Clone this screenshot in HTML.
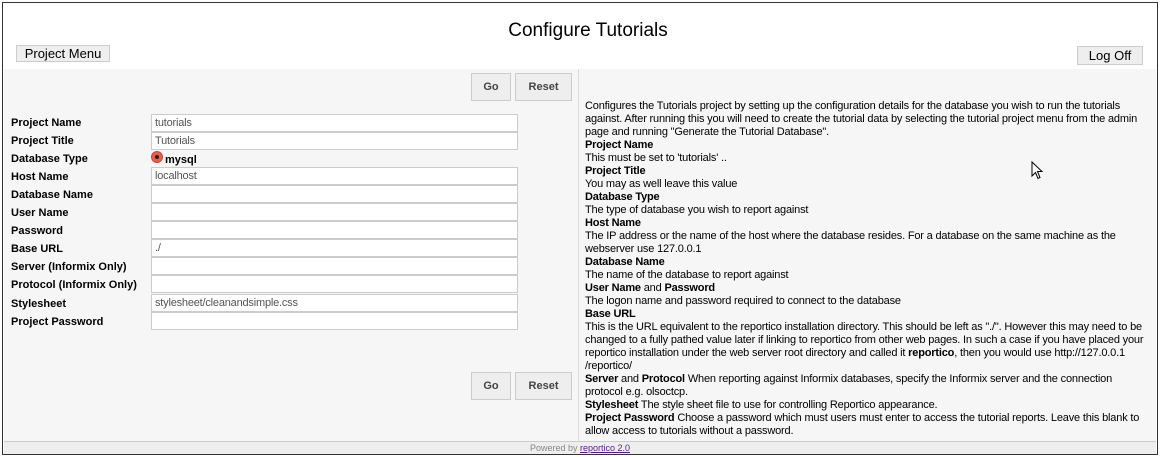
<!DOCTYPE html>
<html><head><meta charset="utf-8"><style>
*{margin:0;padding:0;box-sizing:border-box}
body{width:1160px;height:457px;background:#fff;font-family:"Liberation Sans",Arial,sans-serif;position:relative;overflow:hidden}
.outer{position:absolute;left:2px;top:2px;width:1156px;height:453px;border:1px solid #333;}
.abs{position:absolute}
h1{position:absolute;left:0;width:1176px;top:20px;text-align:center;font-weight:normal;font-size:19px;color:#000}
.btn{position:absolute;background:#eee;border:1px solid #ccc;font-size:13px;text-align:center;color:#000}
.panel{position:absolute;left:4px;top:69px;width:1152px;height:373px;background:#f6f6f6}
.div{position:absolute;left:578px;top:69px;width:1px;height:373px;background:#ddd}
.gb{position:absolute;background:#eee;border:1px solid #ccc;font-size:11px;font-weight:bold;color:#444;text-align:center;line-height:26px;height:28px}
.lbl{position:absolute;left:11px;font-size:11px;font-weight:bold;color:#000}
.inp{position:absolute;left:151px;width:367px;height:18px;background:#fff;border:1px solid #ccc;font-size:11px;color:#555;padding-left:3px;line-height:16px;letter-spacing:-0.2px}
.txt{position:absolute;left:585px;top:100px;font-size:11px;line-height:13px;color:#000;white-space:nowrap;letter-spacing:-0.18px}
.foot{position:absolute;left:4px;top:441px;width:1152px;height:13px;background:#eee;border-top:1px solid #ccc;font-size:9px;color:#888;text-align:center;line-height:12px}
.foot a{color:#551a8b;text-decoration:underline}
</style></head><body>
<div class="outer"></div>
<h1>Configure Tutorials</h1>
<div class="btn" style="left:16px;top:45px;width:94px;height:17px;line-height:15px">Project Menu</div>
<div class="btn" style="left:1077px;top:46px;width:66px;height:19px;line-height:17px">Log Off</div>
<div class="panel"></div>
<div class="div"></div>
<div class="gb" style="left:471px;top:73px;width:40px">Go</div>
<div class="gb" style="left:515px;top:73px;width:57px">Reset</div>
<div class="gb" style="left:471px;top:372px;width:40px">Go</div>
<div class="gb" style="left:515px;top:372px;width:57px">Reset</div>

<div class="lbl" style="top:117px">Project Name</div>
<div class="lbl" style="top:135px">Project Title</div>
<div class="lbl" style="top:153px">Database Type</div>
<div class="lbl" style="top:171px">Host Name</div>
<div class="lbl" style="top:189px">Database Name</div>
<div class="lbl" style="top:207px">User Name</div>
<div class="lbl" style="top:225px">Password</div>
<div class="lbl" style="top:243px">Base URL</div>
<div class="lbl" style="top:261px">Server (Informix Only)</div>
<div class="lbl" style="top:279px">Protocol (Informix Only)</div>
<div class="lbl" style="top:298px">Stylesheet</div>
<div class="lbl" style="top:316px">Project Password</div>

<div class="inp" style="top:114px">tutorials</div>
<div class="inp" style="top:132px">Tutorials</div>
<div class="abs" style="left:151px;top:151px;width:12px;height:12px;border-radius:50%;background:#e8604a;border:1px solid #c44"><div style="position:absolute;left:3px;top:3px;width:4px;height:4px;border-radius:50%;background:#222"></div></div>
<div class="abs" style="left:165px;top:154px;font-size:11px;font-weight:bold">mysql</div>
<div class="inp" style="top:167px">localhost</div>
<div class="inp" style="top:185px"></div>
<div class="inp" style="top:203px"></div>
<div class="inp" style="top:221px"></div>
<div class="inp" style="top:239px">./</div>
<div class="inp" style="top:257px"></div>
<div class="inp" style="top:275px"></div>
<div class="inp" style="top:294px">stylesheet/cleanandsimple.css</div>
<div class="inp" style="top:312px"></div>

<div class="txt">Configures the Tutorials project by setting up the configuration details for the database you wish to run the tutorials<br>
against. After running this you will need to create the tutorial data by selecting the tutorial project menu from the admin<br>
page and running "Generate the Tutorial Database".<br>
<b>Project Name</b><br>
This must be set to 'tutorials' ..<br>
<b>Project Title</b><br>
You may as well leave this value<br>
<b>Database Type</b><br>
The type of database you wish to report against<br>
<b>Host Name</b><br>
The IP address or the name of the host where the database resides. For a database on the same machine as the<br>
webserver use 127.0.0.1<br>
<b>Database Name</b><br>
The name of the database to report against<br>
<b>User Name</b> and <b>Password</b><br>
The logon name and password required to connect to the database<br>
<b>Base URL</b><br>
This is the URL equivalent to the reportico installation directory. This should be left as "./". However this may need to be<br>
changed to a fully pathed value later if linking to reportico from other web pages. In such a case if you have placed your<br>
reportico installation under the web server root directory and called it <b>reportico</b>, then you would use http://127.0.0.1<br>
/reportico/<br>
<b>Server</b> and <b>Protocol</b> When reporting against Informix databases, specify the Informix server and the connection<br>
protocol e.g. olsoctcp.<br>
<b>Stylesheet</b> The style sheet file to use for controlling Reportico appearance.<br>
<b>Project Password</b> Choose a password which must users must enter to access the tutorial reports. Leave this blank to<br>
allow access to tutorials without a password.</div>

<svg class="abs" style="left:1031px;top:161px" width="14" height="20" viewBox="0 0 14 20"><path d="M1 1 L1 15 L4.5 11.5 L7 17.5 L9 16.5 L6.5 10.5 L11 10.5 Z" fill="#fff" stroke="#000" stroke-width="1"/></svg>

<div class="foot">Powered by <a>reportico 2.0</a></div>
</body></html>
